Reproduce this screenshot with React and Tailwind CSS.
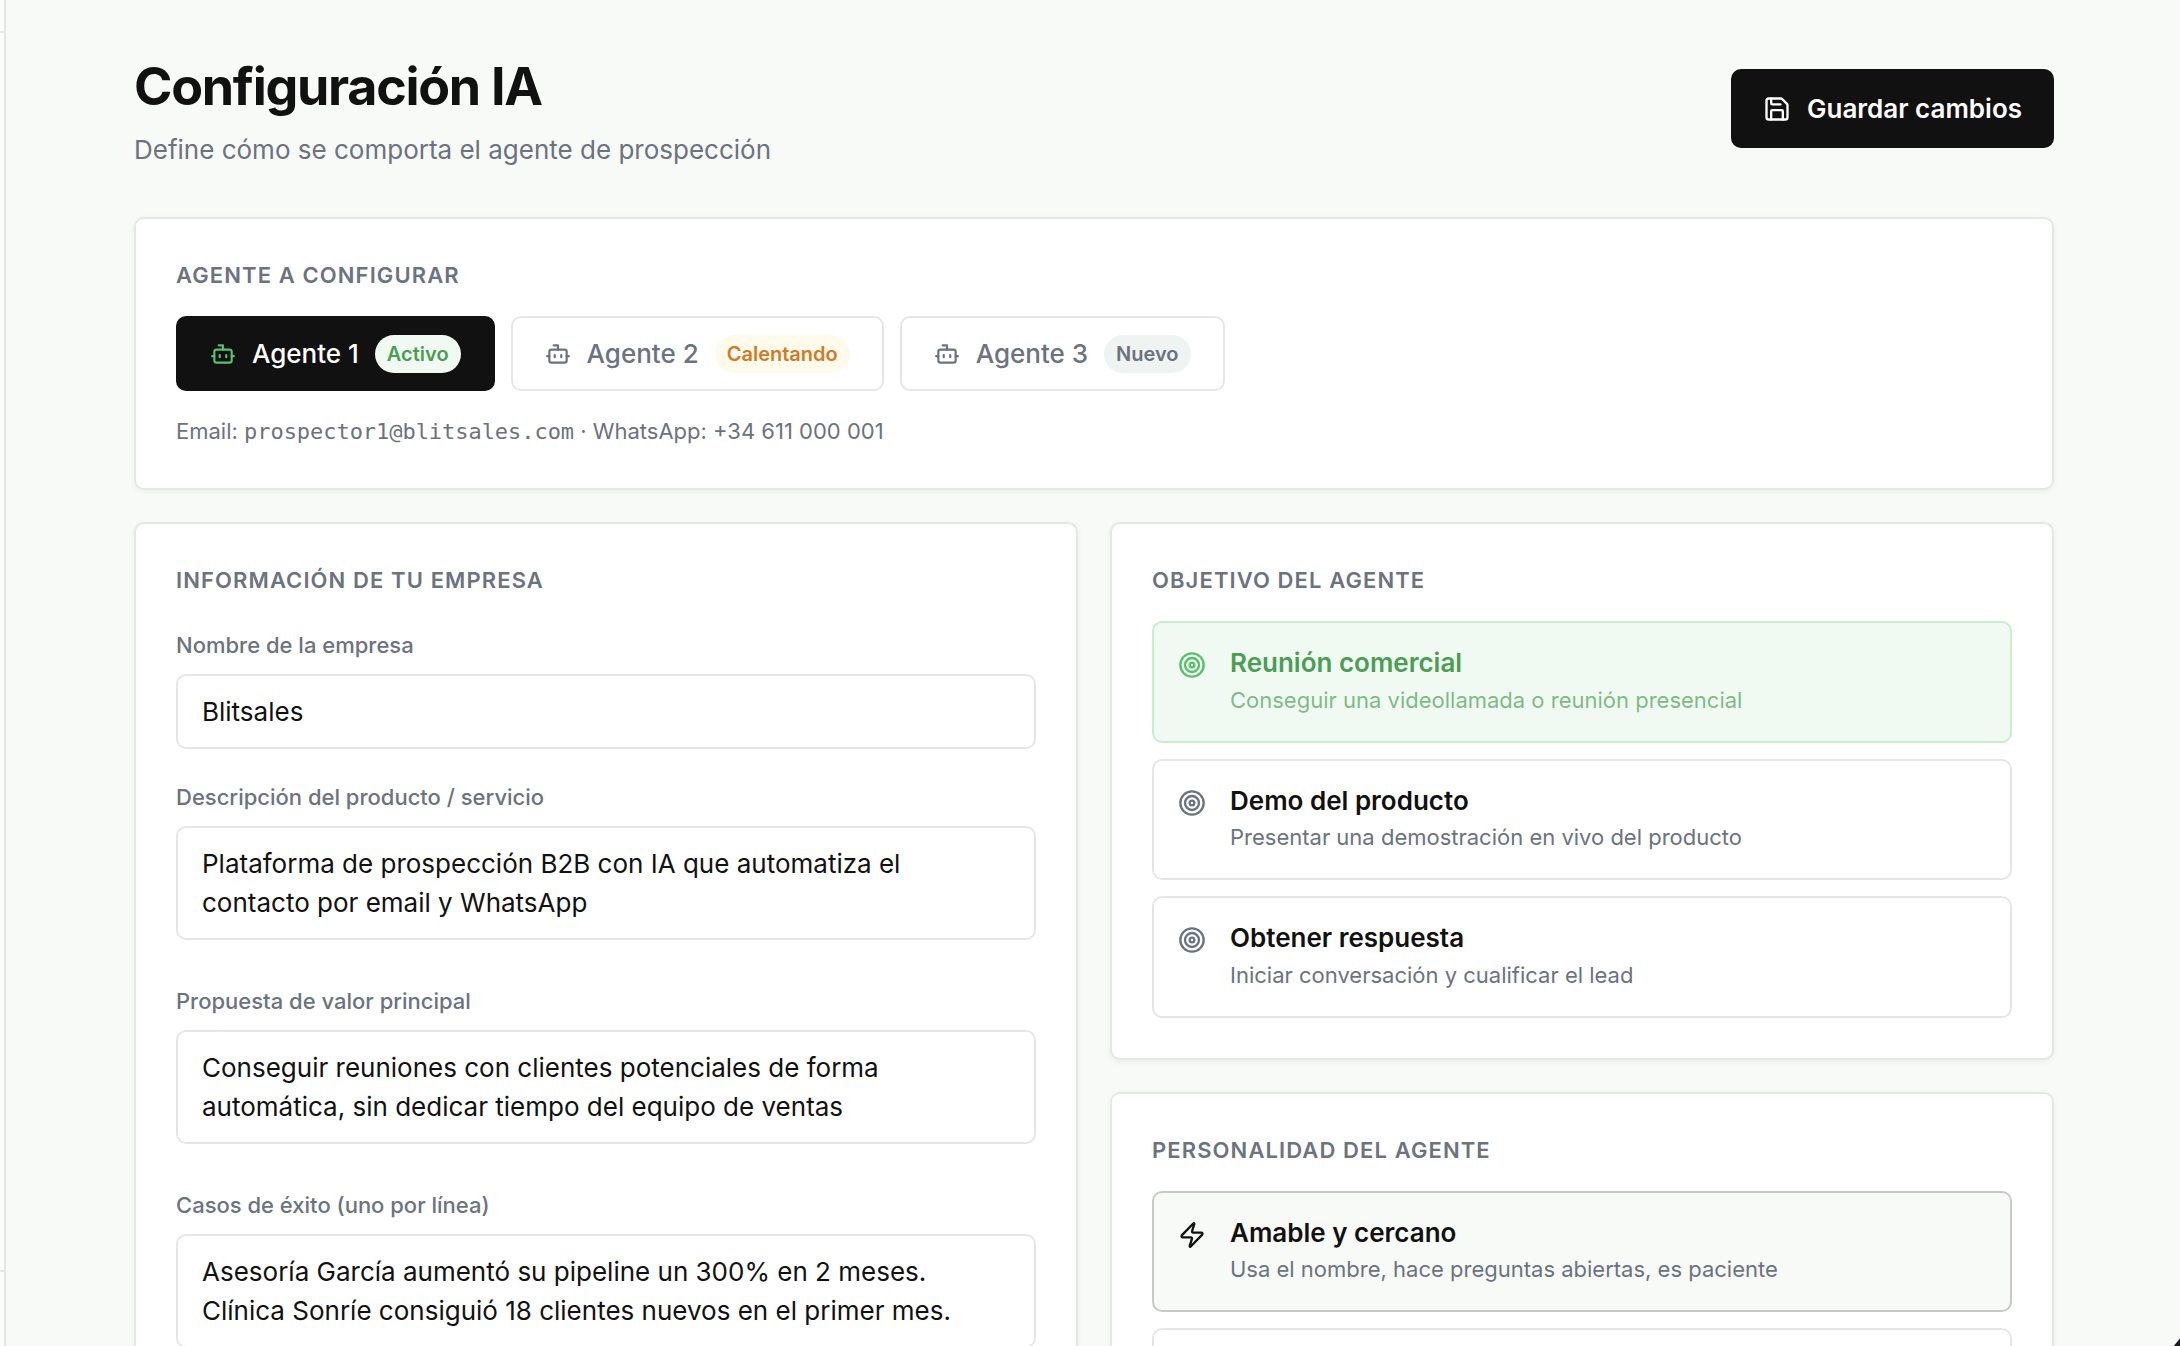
import { useState } from "react";
import { Bot, Save, Target, Zap } from "lucide-react";

const agents = [
  { id: 1, name: "Agente 1", status: "Activo", email: "prospector1@blitsales.com", phone: "+34 611 000 001" },
  { id: 2, name: "Agente 2", status: "Calentando", email: "prospector2@blitsales.com", phone: "+34 611 000 002" },
  { id: 3, name: "Agente 3", status: "Nuevo", email: "prospector3@blitsales.com", phone: "+34 611 000 003" },
];

const statusStyles = {
  Activo: "bg-[#f0faf2] text-[#4a9e52]",
  Calentando: "bg-[#fffbeb] text-[#d07a2a]",
  Nuevo: "bg-[#eff3f1] text-[#6b7280]",
};

const goals = [
  { id: "meeting", title: "Reunión comercial", desc: "Conseguir una videollamada o reunión presencial" },
  { id: "demo", title: "Demo del producto", desc: "Presentar una demostración en vivo del producto" },
  { id: "reply", title: "Obtener respuesta", desc: "Iniciar conversación y cualificar el lead" },
];

const personalities = [
  { id: "friendly", title: "Amable y cercano", desc: "Usa el nombre, hace preguntas abiertas, es paciente" },
];

const fieldClass =
  "block w-full rounded-[10px] border-2 border-[#e4e8e5] bg-white px-6 py-4 text-[26px] leading-[39px] text-[#111111] outline-none";

function Card({ title, className = "", children }) {
  return (
    <section className={`rounded-[10px] border-2 border-[#e4e8e5] bg-white p-10 shadow-[0_2px_6px_rgba(0,0,0,0.05)] ${className}`}>
      <h2 className="text-[22px] leading-[33px] font-semibold tracking-wider text-[#6b7280] uppercase">{title}</h2>
      {children}
    </section>
  );
}

function Field({ label, children }) {
  return (
    <div>
      <label className="mb-3 block text-[22px] leading-[33px] font-medium text-[#6b7280]">{label}</label>
      {children}
    </div>
  );
}

function TextArea({ value, onChange }) {
  return (
    <textarea
      rows={2}
      value={value}
      onChange={(e) => onChange(e.target.value)}
      className={`${fieldClass} mb-[13px] h-[114px] resize-none overflow-hidden`}
    />
  );
}

function Option({ icon: Icon, title, desc, className, iconClass, titleClass, descClass, onClick }) {
  return (
    <button onClick={onClick} className={`flex h-[121.5px] w-full items-start gap-6 rounded-[10px] border-2 px-6 py-5 text-left ${className}`}>
      <Icon size={28} className={`mt-2 shrink-0 ${iconClass}`} />
      <span className="block">
        <span className={`block text-[26px] leading-[39px] font-semibold ${titleClass}`}>{title}</span>
        <span className={`mt-[1.6px] block text-[22px] leading-[33px] ${descClass}`}>{desc}</span>
      </span>
    </button>
  );
}

export default function App() {
  const [agentId, setAgentId] = useState(1);
  const [goal, setGoal] = useState("meeting");
  const [personality, setPersonality] = useState("friendly");
  const [company, setCompany] = useState({
    name: "Blitsales",
    description: "Plataforma de prospección B2B con IA que automatiza el contacto por email y WhatsApp",
    value: "Conseguir reuniones con clientes potenciales de forma automática, sin dedicar tiempo del equipo de ventas",
    cases: "Asesoría García aumentó su pipeline un 300% en 2 meses.\nClínica Sonríe consiguió 18 clientes nuevos en el primer mes.",
  });

  const agent = agents.find((a) => a.id === agentId);
  const update = (key) => (value) => setCompany({ ...company, [key]: value });

  return (
    <div className="flex h-[1346px] overflow-hidden bg-[#f8faf7] font-['Inter','Liberation_Sans',sans-serif] text-[#111111]">
      <aside className="flex w-1.5 shrink-0 flex-col border-r-2 border-[#e4e8e5] bg-white">
        <div className="h-[33px] shrink-0 border-b-2 border-[#e4e8e5]" />
        <div className="flex-1" />
        <div className="h-[76px] shrink-0 border-t-2 border-[#e4e8e5]" />
      </aside>

      <main className="flex-1 pt-12 pr-[126px] pl-32">
        <header className="mb-12 flex items-center justify-between">
          <div>
            <h1 className="text-[52px] leading-[78px] font-bold tracking-tight">Configuración IA</h1>
            <p className="mt-1 text-[26px] leading-[39px] text-[#6b7280]">Define cómo se comporta el agente de prospección</p>
          </div>
          <button className="flex items-center gap-4 rounded-[10px] bg-[#111111] px-8 py-5 text-[26px] leading-[39px] font-semibold text-white">
            <Save size={28} />
            Guardar cambios
          </button>
        </header>

        <Card title="Agente a configurar" className="mb-8">
          <div className="mt-6 flex gap-4">
            {agents.map((a) => (
              <button
                key={a.id}
                onClick={() => setAgentId(a.id)}
                className={`flex items-center gap-4 rounded-[10px] border-2 px-8 py-4 text-[26px] leading-[39px] font-medium ${
                  a.id === agentId ? "border-[#111111] bg-[#111111] text-white" : "border-[#e4e8e5] bg-white text-[#6b7280]"
                }`}
              >
                <Bot size={26} className={a.id === agentId ? "text-[#5bbf6a]" : "text-[#6b7280]"} />
                {a.name}
                <span className={`rounded-full px-3 py-1 text-[20px] leading-[30px] font-semibold ${statusStyles[a.status]}`}>
                  {a.status}
                </span>
              </button>
            ))}
          </div>
          <p className="mt-6 text-[22px] leading-[33px] text-[#6b7280]">
            Email: <span className="font-['DejaVu_Sans_Mono',monospace] tracking-[-0.045px]">{agent.email}</span> · WhatsApp: {agent.phone}
          </p>
        </Card>

        <div className="grid grid-cols-2 items-start gap-8">
          <Card title="Información de tu empresa">
            <div className="mt-8 flex flex-col gap-8">
              <Field label="Nombre de la empresa">
                <input value={company.name} onChange={(e) => update("name")(e.target.value)} className={`${fieldClass} h-[75px]`} />
              </Field>
              <Field label="Descripción del producto / servicio">
                <TextArea value={company.description} onChange={update("description")} />
              </Field>
              <Field label="Propuesta de valor principal">
                <TextArea value={company.value} onChange={update("value")} />
              </Field>
              <Field label="Casos de éxito (uno por línea)">
                <TextArea value={company.cases} onChange={update("cases")} />
              </Field>
            </div>
          </Card>

          <div className="flex flex-col gap-8">
            <Card title="Objetivo del agente">
              <div className="mt-6 flex flex-col gap-4">
                {goals.map((g) => {
                  const active = g.id === goal;
                  return (
                    <Option
                      key={g.id}
                      icon={Target}
                      title={g.title}
                      desc={g.desc}
                      onClick={() => setGoal(g.id)}
                      className={active ? "border-[#c8edcf] bg-[#f0faf2]" : "border-[#e4e8e5] bg-white"}
                      iconClass={active ? "text-[#5bbf6a]" : "text-[#6b7280]"}
                      titleClass={active ? "text-[#4a9e52]" : "text-[#111111]"}
                      descClass={active ? "text-[#4a9e52]/70" : "text-[#6b7280]"}
                    />
                  );
                })}
              </div>
            </Card>
            <Card title="Personalidad del agente">
              <div className="mt-6 flex flex-col gap-4">
                {personalities.map((p) => {
                  const active = p.id === personality;
                  return (
                    <Option
                      key={p.id}
                      icon={Zap}
                      title={p.title}
                      desc={p.desc}
                      onClick={() => setPersonality(p.id)}
                      className={active ? "border-[#c8cac8] bg-[#f8faf7]" : "border-[#e4e8e5] bg-white"}
                      iconClass={active ? "text-[#111111]" : "text-[#6b7280]"}
                      titleClass="text-[#111111]"
                      descClass="text-[#6b7280]"
                    />
                  );
                })}
                <div className="h-[121.5px] rounded-[10px] border-2 border-[#e4e8e5]" />
              </div>
            </Card>
          </div>
        </div>
      </main>

      {/* floating help bubble, mostly off the corner */}
      <div className="fixed -right-[68px] -bottom-[61px] size-20 rounded-full bg-[#1a1a24]" />
    </div>
  );
}
